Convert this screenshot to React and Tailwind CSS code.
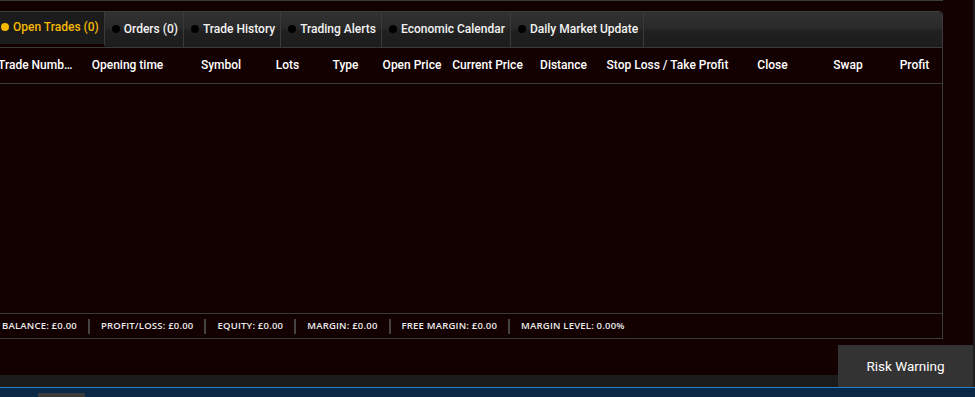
import React from 'react';

const tabs = [
  { label: 'Open Trades (0)', active: true },
  { label: 'Orders (0)' },
  { label: 'Trade History' },
  { label: 'Trading Alerts' },
  { label: 'Economic Calendar' },
  { label: 'Daily Market Update' },
];

const columns = [
  { label: 'Trade Number', w: 'w-[82px]', first: true },
  { label: 'Opening time', w: 'w-[109px]' },
  { label: 'Symbol', w: 'w-[78px]' },
  { label: 'Lots', w: 'w-[55px]' },
  { label: 'Type', w: 'w-[61px]' },
  { label: 'Open Price', w: 'w-[72px]' },
  { label: 'Current Price', w: 'w-[79px]' },
  { label: 'Distance', w: 'w-[73px]' },
  { label: 'Stop Loss / Take Profit', w: 'w-[135px]' },
  { label: 'Close', w: 'w-[75px]' },
  { label: 'Swap', w: 'w-[76px]' },
  { label: 'Profit', w: 'w-[57px]' },
];

const stats = [
  'BALANCE: £0.00',
  'PROFIT/LOSS: £0.00',
  'EQUITY: £0.00',
  'MARGIN: £0.00',
  'FREE MARGIN: £0.00',
  'MARGIN LEVEL: 0.00%',
];

function Tab({ label, active, first }) {
  return (
    <div
      className={
        'flex items-center h-full pr-[5px] pb-[2px] ' +
        (first ? 'pl-[10px] ' : 'pl-[7px] ') +
        (active
          ? 'bg-[#1b1b1b] border-b-[3px] border-[#130102] border-r border-r-[#3a3a3a]'
          : 'border-r border-[#3a3a3a]')
      }
    >
      <span
        className={
          'w-2 h-2 rounded-full mr-[4px] ' +
          (active ? 'bg-[#f5b800]' : 'bg-black')
        }
      />
      <span
        className={
          'text-[12px] font-medium whitespace-nowrap ' +
          (active ? 'text-[#f5b800]' : 'text-[#f2f2f2]')
        }
      >
        {label}
      </span>
    </div>
  );
}

function TradesPanel() {
  return (
    <div className="border border-[#3c3c3c] rounded-tr-[4px] bg-[#130102]">
      {/* tabs */}
      <div className="flex h-[36px] border-b border-[#3a3a3a] rounded-tr-[4px] bg-[linear-gradient(to_bottom,#313131_0%,#2a2a2a_45%,#202020_55%,#1c1c1c_100%)]">
        {tabs.map((t, i) => (
          <Tab key={t.label} {...t} first={i === 0} />
        ))}
        <div className="flex-1 border-0" />
      </div>

      {/* column headers */}
      <div className="flex h-[36px] pb-[2px] border-b border-[#3a3a3a] items-center">
        {columns.map((c) => (
          <div
            key={c.label}
            className={
              c.w +
              ' shrink-0 text-[12px] font-medium text-white whitespace-nowrap ' +
              (c.first
                ? 'pl-[7px] overflow-hidden text-ellipsis text-left'
                : 'text-center')
            }
          >
            {c.label}
          </div>
        ))}
      </div>

      {/* empty body */}
      <div className="h-[229px]" />

      {/* account summary */}
      <div className="flex items-center h-[25px] border-t border-[#3a3a3a] pl-[11px]">
        {stats.map((s, i) => (
          <React.Fragment key={s}>
            {i > 0 && <span className="w-[2px] h-[15px] bg-[#444] ml-[11px] mr-[11px]" />}
            <span className="text-[9.5px] font-semibold text-[#ececec] tracking-[0.2px] font-['Open_Sans',sans-serif] whitespace-nowrap">
              {s}
            </span>
          </React.Fragment>
        ))}
      </div>
    </div>
  );
}

export default function App() {
  return (
    <div className="w-[975px] h-[397px] overflow-hidden bg-[#130102] flex flex-col font-['Roboto',sans-serif]">
      <div className="flex h-[387px]">
        <div className="flex-1 flex flex-col min-w-0">
          <div className="ml-[-10px] w-[953px] border-t border-[#3c3c3c] pt-[10px]">
            <TradesPanel />
          </div>
          <div className="flex-1" />
          <div className="flex h-[42px]">
            <div className="flex-1 flex flex-col">
              <div className="flex-1" />
              <div className="h-[12px] bg-[#1b1b1b]" />
            </div>
            <button className="w-[135px] bg-[#333333] text-white text-[13.5px] flex items-center justify-center">
              Risk Warning
            </button>
          </div>
        </div>
        <div className="w-[2px] bg-[#1f1f1f]" />
      </div>
      <div className="h-px bg-[#2a7fc4]" />
      <div className="flex-1 bg-[#0a2745] flex">
        <div className="ml-[38px] mt-[5px] w-[47px] bg-[#3a3a3a]" />
      </div>
    </div>
  );
}
